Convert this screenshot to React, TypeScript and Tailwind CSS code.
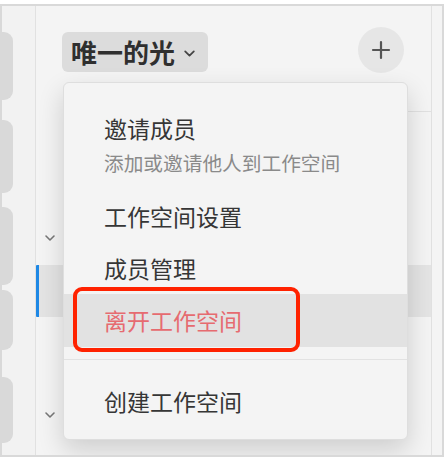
const railTiles = [
  { mt: 26, h: 68 },
  { mt: 20, h: 73 },
  { mt: 14, h: 78 },
  { mt: 5, h: 60 },
  { mt: 27, h: 66 },
]

function Chevron({ className }: { className?: string }) {
  return (
    <svg className={className} viewBox="0 0 12 8" fill="none" stroke="currentColor" strokeWidth={1.6} strokeLinecap="round" strokeLinejoin="round">
      <path d="M2 2l4 4 4-4" />
    </svg>
  )
}

export default function App() {
  return (
    <div className="w-[448px] h-[462px] bg-white pt-[4px] font-['Noto_Sans_CJK_SC','Noto_Sans',sans-serif]">
      <div className="relative flex w-[444px] h-[453px] border-2 border-[#d9d9d9] bg-[#f4f4f4] overflow-hidden">
        {/* server rail */}
        <div className="w-[33px] flex flex-col bg-[#f2f2f2]">
          {railTiles.map((t, i) => (
            <div
              key={i}
              className="w-[11px] rounded-r-[9px] bg-[#d9d9d9]"
              style={{ marginTop: t.mt, height: t.h }}
            />
          ))}
        </div>

        {/* channel column */}
        <div className="w-[28px] border-l border-[#e1e1e1] flex flex-col bg-[#f4f4f4]">
          <div className="h-[232px] flex items-end justify-center">
            <Chevron className="w-[12px] h-[8px] text-[#777] mb-[-4px]" />
          </div>
          <div className="mt-[27px] h-[52px] bg-[#e4e4e4] border-l-[3px] border-[#1e88e5] rounded-l-[1px]" />
          <div className="mt-[94px] flex justify-center">
            <Chevron className="w-[12px] h-[8px] text-[#777]" />
          </div>
        </div>

        {/* main */}
        <div className="flex-1 flex flex-col">
          <div className="h-[106px] border-b border-[#e1e1e1] flex items-start justify-between">
            <div className="mt-[26px] ml-[-1px] h-[40px] pl-[9px] pr-[12px] rounded-[6px] bg-[#dcdcdc] flex items-center gap-[8px]">
              <span className="text-[26px] leading-[40px] font-bold text-[#2f2f2f]">唯一的光</span>
              <Chevron className="w-[13px] h-[9px] text-[#444] mt-[2px]" />
            </div>
            <div className="mt-[21px] mr-[27px] w-[46px] h-[46px] rounded-full bg-[#e6e6e6] flex items-center justify-center">
              <svg className="w-[20px] h-[20px] text-[#555]" viewBox="0 0 20 20" fill="none" stroke="currentColor" strokeWidth={2.2} strokeLinecap="round">
                <path d="M10 2v16M2 10h16" />
              </svg>
            </div>
          </div>
          <div className="mt-[153px] h-[52px] bg-[#e4e4e4]" />
        </div>

        {/* right pane edge */}
        <div className="w-[11px] border-l border-[#e1e1e1] bg-[#f4f4f4]" />

        {/* workspace menu */}
        <div className="absolute left-[61px] top-[76px] w-[345px] h-[358px] rounded-[6px] border border-[#dedede] bg-[#f4f4f4] shadow-[0_10px_26px_rgba(0,0,0,0.16)]">
          <div className="pt-[30px] pb-[14px] pl-[40px]">
            <div className="text-[23px] leading-[30px] text-[#363636]">邀请成员</div>
            <div className="mt-[7px] text-[19.7px] leading-[26px] text-[#8a8a8a]">添加或邀请他人到工作空间</div>
          </div>
          <div className="h-[52px] pl-[40px] flex items-center text-[23px] text-[#363636]">工作空间设置</div>
          <div className="h-[52px] pl-[40px] flex items-center text-[23px] text-[#363636]">成员管理</div>
          <div className="h-[53px] pl-[40px] flex items-center text-[23px] text-[#e66b70] bg-[#e2e2e2]">离开工作空间</div>
          <div className="mt-[12px] border-t border-[#e2e2e2]" />
          <div className="h-[78px] pt-[4px] pl-[40px] flex items-center text-[23px] text-[#363636]">创建工作空间</div>

          <div className="absolute left-[9px] top-[204px] w-[227px] h-[65px] rounded-[9px] border-[4px] border-[#ff2200]" />
        </div>
      </div>
    </div>
  )
}
